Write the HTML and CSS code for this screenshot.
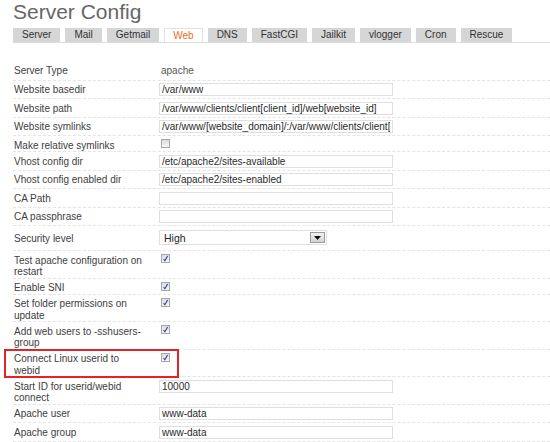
FILE: index.html
```html
<!DOCTYPE html>
<html>
<head>
<meta charset="utf-8">
<title>Server Config</title>
<link rel="stylesheet" href="styles.css">
</head>
<body>
<div class="page">
  <h1 class="title">Server Config</h1>
  <ul class="tabs">
    <li class="tab">Server</li>
    <li class="tab">Mail</li>
    <li class="tab">Getmail</li>
    <li class="tab active">Web</li>
    <li class="tab">DNS</li>
    <li class="tab">FastCGI</li>
    <li class="tab">Jailkit</li>
    <li class="tab">vlogger</li>
    <li class="tab">Cron</li>
    <li class="tab">Rescue</li>
  </ul>

  <div class="form">
    <div class="row row-plain">
      <div class="label">Server Type</div>
      <div class="field"><span class="value">apache</span></div>
    </div>
    <div class="row row-input">
      <div class="label">Website basedir</div>
      <div class="field"><input class="text" type="text" value="/var/www"></div>
    </div>
    <div class="row row-input">
      <div class="label">Website path</div>
      <div class="field"><input class="text" type="text" value="/var/www/clients/client[client_id]/web[website_id]"></div>
    </div>
    <div class="row row-input">
      <div class="label">Website symlinks</div>
      <div class="field"><input class="text" type="text" value="/var/www/[website_domain]/:/var/www/clients/client[client_id]/[website_domain]/"></div>
    </div>
    <div class="row row-check">
      <div class="label">Make relative symlinks</div>
      <div class="field"><span class="cb"></span></div>
    </div>
    <div class="row row-input">
      <div class="label">Vhost config dir</div>
      <div class="field"><input class="text" type="text" value="/etc/apache2/sites-available"></div>
    </div>
    <div class="row row-input">
      <div class="label">Vhost config enabled dir</div>
      <div class="field"><input class="text" type="text" value="/etc/apache2/sites-enabled"></div>
    </div>
    <div class="row row-input">
      <div class="label">CA Path</div>
      <div class="field"><input class="text" type="text" value=""></div>
    </div>
    <div class="row row-input">
      <div class="label">CA passphrase</div>
      <div class="field"><input class="text" type="text" value=""></div>
    </div>
    <div class="row row-select">
      <div class="label">Security level</div>
      <div class="field">
        <div class="select">
          <span class="select-text">High</span>
          <span class="select-btn"><svg width="7" height="4" viewBox="0 0 7 4"><path d="M0 0H7L3.5 4Z" fill="#111"/></svg></span>
        </div>
      </div>
    </div>
    <div class="row row-check">
      <div class="label">Test apache configuration on restart</div>
      <div class="field"><span class="cb checked"><svg width="7" height="7" viewBox="0 0 7 7"><path d="M1.6 4.2 L2.9 5.8 L5.6 1" fill="none" stroke="#33519c" stroke-width="1.2"/></svg></span></div>
    </div>
    <div class="row row-check">
      <div class="label">Enable SNI</div>
      <div class="field"><span class="cb checked"><svg width="7" height="7" viewBox="0 0 7 7"><path d="M1.6 4.2 L2.9 5.8 L5.6 1" fill="none" stroke="#33519c" stroke-width="1.2"/></svg></span></div>
    </div>
    <div class="row row-check">
      <div class="label">Set folder permissions on update</div>
      <div class="field"><span class="cb checked"><svg width="7" height="7" viewBox="0 0 7 7"><path d="M1.6 4.2 L2.9 5.8 L5.6 1" fill="none" stroke="#33519c" stroke-width="1.2"/></svg></span></div>
    </div>
    <div class="row row-check">
      <div class="label">Add web users to -sshusers-group</div>
      <div class="field"><span class="cb checked"><svg width="7" height="7" viewBox="0 0 7 7"><path d="M1.6 4.2 L2.9 5.8 L5.6 1" fill="none" stroke="#33519c" stroke-width="1.2"/></svg></span></div>
    </div>
    <div class="row row-check">
      <div class="label">Connect Linux userid to webid</div>
      <div class="field"><span class="cb checked"><svg width="7" height="7" viewBox="0 0 7 7"><path d="M1.6 4.2 L2.9 5.8 L5.6 1" fill="none" stroke="#33519c" stroke-width="1.2"/></svg></span></div>
      <div class="highlight"></div>
    </div>
    <div class="row row-input">
      <div class="label">Start ID for userid/webid connect</div>
      <div class="field"><input class="text" type="text" value="10000"></div>
    </div>
    <div class="row row-input">
      <div class="label">Apache user</div>
      <div class="field"><input class="text" type="text" value="www-data"></div>
    </div>
    <div class="row row-input">
      <div class="label">Apache group</div>
      <div class="field"><input class="text" type="text" value="www-data"></div>
    </div>
  </div>
</div>
</body>
</html>
```

FILE: styles.css
```css
html, body {
  margin: 0;
  padding: 0;
  background: #ffffff;
  font-family: "Liberation Sans", Arial, sans-serif;
}

.page {
  padding-left: 13px;
  overflow: hidden;
}

.title {
  margin: 0;
  font-size: 21px;
  line-height: 23px;
  font-weight: normal;
  color: #666666;
}

.tabs {
  display: flex;
  gap: 5px;
  list-style: none;
  margin: 5px 0 0;
  padding: 0;
  border-bottom: 1px solid #dcdcdc;
}

.tab {
  box-sizing: border-box;
  height: 14px;
  line-height: 14px;
  padding: 0 9px;
  background: #d6d6d6;
  font-size: 10px;
  color: #333333;
}

.tab.active {
  background: #ffffff;
  border: 1px solid #e2e2e2;
  border-bottom: none;
  line-height: 13px;
  padding: 0 8px;
  color: #f26a1b;
}

.form {
  margin-top: 18px;
}

.row {
  position: relative;
  display: grid;
  grid-template-columns: 146px 1fr;
  border-bottom: 1px dashed #e4e4e4;
}

.label {
  padding: 3.5px 14px 0 1px;
  line-height: 11.5px;
  font-size: 10px;
  color: #3e3e3e;
}

.row-plain .label {
  padding-top: 4px;
  padding-bottom: 3px;
}

.value {
  display: block;
  padding: 4px 0 0 2px;
  line-height: 11.5px;
  font-size: 10px;
  color: #555555;
}

.row-input .field {
  padding: 2.5px 0 2px;
}

.text {
  display: block;
  box-sizing: border-box;
  width: 234px;
  height: 13px;
  margin: 0;
  padding: 0 2px;
  border: 1px solid #dfdfdf;
  background: #ffffff;
  font-family: "Liberation Sans", Arial, sans-serif;
  font-size: 10px;
  color: #2a2a2a;
  outline: none;
}

.row-check .field {
  padding: 3px 0 3px 2px;
}

.cb {
  display: flex;
  align-items: center;
  justify-content: center;
  box-sizing: border-box;
  width: 9px;
  height: 9px;
  border: 1px solid #a8a8a8;
  background: linear-gradient(#dcdcdc, #f6f6f6);
}

.row-select .label {
  padding-top: 6.5px;
}

.row-select .field {
  padding: 4px 0 5px;
}

.select {
  display: flex;
  align-items: center;
  justify-content: space-between;
  box-sizing: border-box;
  width: 168px;
  height: 15px;
  border: 1px solid #e0e0e0;
  background: #ffffff;
}

.select-text {
  padding-left: 4px;
  font-size: 10.5px;
  color: #222222;
}

.select-btn {
  display: flex;
  align-items: center;
  justify-content: center;
  box-sizing: border-box;
  width: 15px;
  height: 11px;
  margin-right: 1px;
  border: 1px solid #9c9c9c;
  background: linear-gradient(#f2f2f2, #d2d2d2);
}

.highlight {
  position: absolute;
  left: -9px;
  top: -1px;
  width: 175px;
  height: 29px;
  box-sizing: border-box;
  border: 2px solid #e2232a;
  pointer-events: none;
}
```
